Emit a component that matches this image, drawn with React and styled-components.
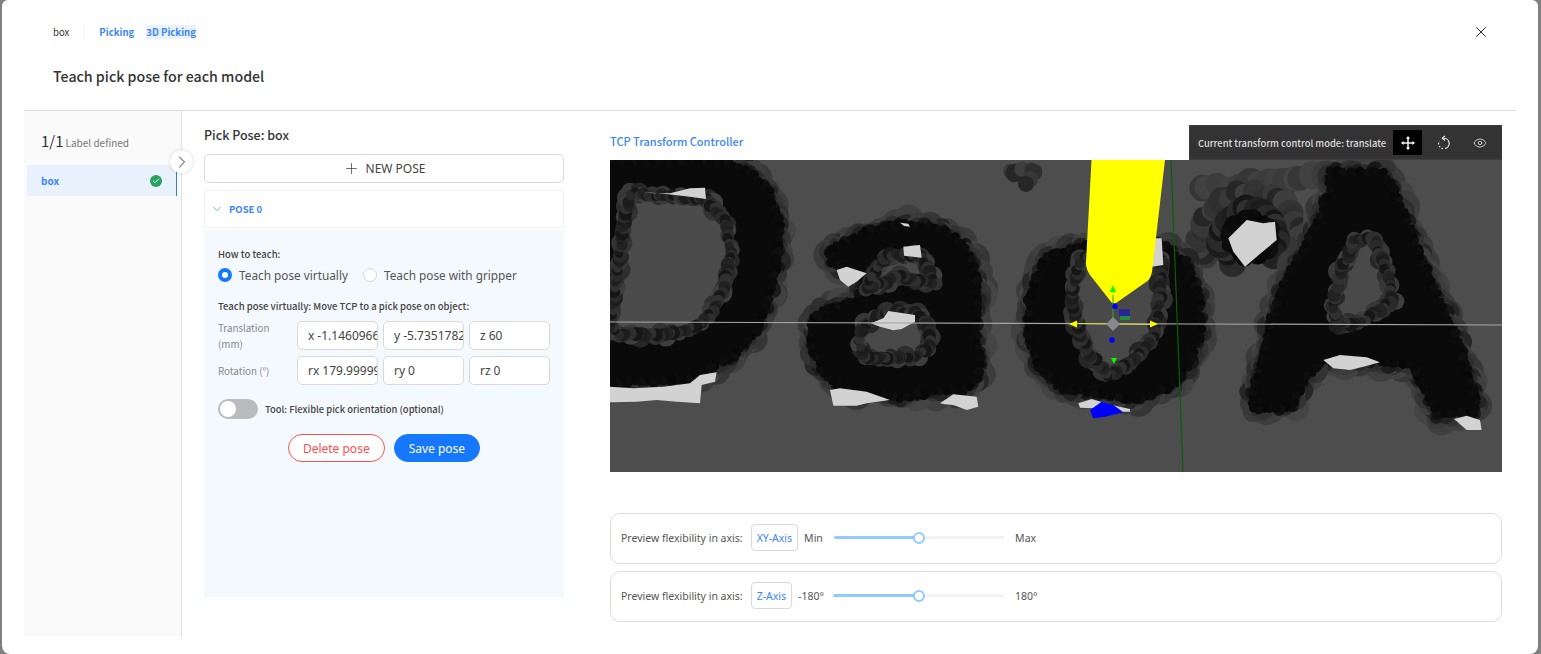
import styled, { createGlobalStyle } from "styled-components";
import { Plus, X, ChevronDown, ChevronRight, Check, Eye } from "lucide-react";

const Global = createGlobalStyle`
  html, body { margin: 0; padding: 0; background: #808080; overflow: hidden; }
  * { box-sizing: border-box; }
  body { font-family: "Noto Sans CJK SC", "Noto Sans", sans-serif; }
`;
const BLUE = "#3b86f7";
const BODY_FONT = `"Noto Sans", "Open Sans", sans-serif`;

const Modal = styled.div`
  width: 1536px;
  height: 654px;
  margin-left: 2px;
  background: #fff;
  border-radius: 6px 6px 8px 8px;
  display: flex;
  flex-direction: column;
  position: relative;
`;
const Header = styled.div`
  height: 111px;
  margin: 0 22px;
  padding: 24px 0 0 29px;
  border-bottom: 1px solid #dcdcdc;
`;
const Crumbs = styled.div`
  display: flex;
  align-items: center;
  height: 16px;
  font-size: 9.6px;
  color: #333;
`;
const CrumbName = styled.span`
  padding-right: 14px;
  border-right: 1px solid #eee;
  margin-right: 15px;
  line-height: 12px;
`;
const Tag = styled.span`
  color: ${BLUE};
  font-weight: 700;
  margin-right: 12px;
  line-height: 14px;
  background: ${(props) => (props.$active ? "#e8f1fd" : "transparent")};
`;
const Title = styled.div`
  margin-top: 25px;
  font-size: 14.2px;
  line-height: 22px;
  font-weight: 500;
  color: #333;
`;
const CloseBtn = styled.div`
  position: absolute;
  top: 23px;
  left: 1470px;
  color: #111;
  display: flex;
`;
const Body = styled.div`
  display: flex;
  margin: 0 22px;
  height: 525px;
`;
const Sidebar = styled.div`
  width: 158px;
  height: 525px;
  background: #fafafa;
  border-right: 1px solid #e0e0e0;
  padding: 19px 4px 0 3px;
  position: relative;
`;
const Count = styled.div`
  display: flex;
  align-items: baseline;
  height: 22px;
  padding-left: 14px;
  font-size: 15px;
  color: #333;
  gap: 2px;
  margin-bottom: 13px;
`;
const CountLabel = styled.span`
  font-size: 10px;
  color: #777;
`;
const LabelItem = styled.div`
  height: 31px;
  width: 150px;
  display: flex;
  align-items: center;
  justify-content: space-between;
  padding: 0 14px;
  background: #e8f1fc;
  border-right: 1px solid #2d7ff0;
  font-size: 10px;
  font-weight: 700;
  color: ${BLUE};
`;
const DoneBadge = styled.span`
  width: 12px;
  height: 12px;
  border-radius: 50%;
  background: #27a35f;
  color: #fff;
  display: flex;
  align-items: center;
  justify-content: center;
`;
const Expander = styled.div`
  position: absolute;
  top: 39px;
  left: 146px;
  width: 23px;
  height: 23px;
  border-radius: 50%;
  background: #fff;
  box-shadow: 0 0 3px rgba(0, 0, 0, 0.2);
  display: flex;
  align-items: center;
  justify-content: center;
  color: #222;
  z-index: 2;
`;
const PosePane = styled.div`
  width: 360px;
  margin-left: 22px;
  padding-top: 14px;
  display: flex;
  flex-direction: column;
`;
const PaneTitle = styled.div`
  height: 20px;
  line-height: 20px;
  font-size: 12.5px;
  font-weight: 500;
  color: #333;
  margin-bottom: 9px;
`;
const NewPose = styled.div`
  height: 29px;
  border: 1px solid #d9d9d9;
  border-radius: 5px;
  display: flex;
  align-items: center;
  justify-content: center;
  gap: 6px;
  font-family: ${BODY_FONT};
  font-size: 12px;
  color: #444;
  margin-bottom: 7px;
`;
const PoseHead = styled.div`
  height: 38px;
  border: 1px solid #f0f0f0;
  display: flex;
  align-items: center;
  gap: 5px;
  padding-left: 5px;
  font-size: 9.5px;
  font-weight: 700;
  color: ${BLUE};
  margin-bottom: 2px;
`;
const PosePanel = styled.div`
  height: 367px;
  background: #f4f9fd;
  padding: 17px 14px 0;
`;
const SmallHead = styled.div`
  font-size: 9.5px;
  font-weight: 500;
  line-height: 14px;
  color: #444;
`;
const RadioRow = styled.div`
  display: flex;
  margin-top: 5px;
  margin-bottom: 15px;
  height: 18px;
  align-items: center;
`;
const RadioItem = styled.div`
  display: flex;
  align-items: center;
  gap: 7px;
  font-family: ${BODY_FONT};
  font-size: 11.8px;
  color: #555;
  margin-right: 15px;
`;
const RadioDot = styled.span`
  width: 14px;
  height: 14px;
  border-radius: 50%;
  background: #fff;
  border: ${(props) => (props.$on ? "4px solid #1677ff" : "1px solid #d5d5d5")};
`;
const FieldGrid = styled.div`
  display: grid;
  grid-template-columns: 74px 81px 81px 81px;
  column-gap: 5px;
  row-gap: 6px;
  margin-top: 8px;
  grid-auto-rows: 29px;
`;
const FieldLabel = styled.div`
  font-size: 9.8px;
  line-height: 16px;
  color: #888;
  width: 60px;
  align-self: center;
`;
const Field = styled.div`
  background: #fff;
  border: 1px solid #d9d9d9;
  border-radius: 5px;
  padding-left: 10px;
  font-family: ${BODY_FONT};
  font-size: 12px;
  line-height: 27px;
  color: #444;
  overflow: hidden;
  white-space: nowrap;
`;
const FieldPrefix = styled.span`
  margin-right: 3px;
`;
const ToggleRow = styled.div`
  display: flex;
  align-items: center;
  gap: 7px;
  margin-top: 14px;
  font-size: 9.4px;
  font-weight: 500;
  color: #444;
`;
const Toggle = styled.span`
  width: 40px;
  height: 20px;
  border-radius: 10px;
  background: #b9bbbd;
  padding: 2px;
  display: flex;
`;
const Knob = styled.span`
  width: 16px;
  height: 16px;
  border-radius: 50%;
  background: #fff;
`;
const Actions = styled.div`
  display: flex;
  justify-content: center;
  gap: 9px;
  margin-top: 15px;
`;
const PillButton = styled.div`
  height: 28px;
  padding: 0 14px;
  border-radius: 14px;
  font-family: ${BODY_FONT};
  font-size: 12px;
  display: flex;
  align-items: center;
  color: ${(props) => (props.$primary ? "#fff" : "#ff4d4f")};
  background: ${(props) => (props.$primary ? "#1677ff" : "#fff")};
  border: 1px solid ${(props) => (props.$primary ? "#1677ff" : "#ff4d4f")};
`;
const ViewPane = styled.div`
  width: 892px;
  margin-left: 46px;
  padding-top: 14px;
`;
const ViewHead = styled.div`
  height: 35px;
  display: flex;
  justify-content: space-between;
`;
const ViewTitle = styled.div`
  font-size: 11px;
  font-weight: 500;
  color: ${BLUE};
  line-height: 33px;
`;
const ModeBar = styled.div`
  width: 313px;
  background: #333;
  border: 1px solid #3d3d3d;
  display: flex;
  align-items: center;
  padding-left: 8px;
  font-size: 9.4px;
  font-weight: 500;
  color: #ddd;
`;
const ModeLabel = styled.span`
  width: 195px;
  white-space: nowrap;
`;
const ModeBtn = styled.span`
  width: 29px;
  height: 25px;
  margin-right: ${(props) => props.$gap || 0}px;
  display: flex;
  align-items: center;
  justify-content: center;
  background: ${(props) => (props.$on ? "#000" : "transparent")};
  border-radius: 1px;
  color: #fff;
`;
const Scene = styled.svg`
  display: block;
  width: 892px;
  height: 312px;
  background: #4d4d4d;
`;
const Cards = styled.div`
  margin-top: 41px;
  display: flex;
  flex-direction: column;
  gap: 7px;
`;
const AxisCard = styled.div`
  height: 51px;
  border: 1px solid #dcdcdc;
  border-radius: 10px;
  display: flex;
  align-items: center;
  padding: 0 0 2px 10px;
  font-family: ${BODY_FONT};
  font-size: 10.5px;
  color: #555;
`;
const AxisTag = styled.span`
  height: 27px;
  padding: 0 5px;
  margin: 0 6px 0 8px;
  border: 1px solid #d9d9d9;
  border-radius: 4px;
  color: ${BLUE};
  display: flex;
  align-items: center;
`;
const SliderTrack = styled.div`
  width: ${(props) => props.$width}px;
  height: 3px;
  background: #f2f2f2;
  border-radius: 2px;
  margin: 0 11px 0 10px;
  position: relative;
`;
const SliderFill = styled.div`
  height: 3px;
  border-radius: 2px;
  background: #91caff;
`;
const SliderHandle = styled.span`
  position: absolute;
  top: -4.5px;
  width: 12px;
  height: 12px;
  margin-left: -6px;
  border-radius: 50%;
  background: #fff;
  border: 2px solid #91caff;
`;
const EndLabel = styled.span`
  width: ${(props) => props.$width}px;
`;

// seeded noise so the point cloud looks the same each run
const rand = (i) => {
  const v = Math.sin(i * 12.9898 + 4.1) * 43758.5453;
  return v - Math.floor(v);
};

// dab overlapping circles along a line, that is how the depth map looks
const dabs = (pts, r, tones, seed, step = 9) => {
  const out = [];
  let n = seed;
  for (let p = 0; p < pts.length - 1; p++) {
    const [x1, y1] = pts[p];
    const [x2, y2] = pts[p + 1];
    const len = Math.hypot(x2 - x1, y2 - y1);
    const count = Math.max(1, Math.round(len / step));
    for (let i = 0; i < count; i++) {
      const t = i / count;
      n += 1;
      out.push(
        <circle
          key={`${seed}-${n}`}
          cx={x1 + (x2 - x1) * t + (rand(n) - 0.5) * r * 0.6}
          cy={y1 + (y2 - y1) * t + (rand(n + 50) - 0.5) * r * 0.6}
          r={r * (0.7 + rand(n + 90) * 0.5)}
          fill={tones[n % tones.length]}
        />
      );
    }
  }
  return out;
};

const HALO = ["#3f3f3f", "#3a3a3a", "#444444", "#363636", "#414141", "#3c3c3c"];
const RIM = ["#1c1c1c", "#2a2a2a", "#161616", "#303030", "#222222"];
const INNER = ["#2e2e2e", "#383838", "#262626", "#3e3e3e", "#333333"];
const CORE = ["#0a0a0a", "#0c0c0c", "#080808", "#0e0e0e"];

// x, y in the crops: left one is 600,125 and right one is 1050,125 at 3x
const L = (pts) => pts.map(([x, y]) => [600 + x / 3, 125 + y / 3]);
const R = (pts) => pts.map(([x, y]) => [1050 + x / 3, 125 + y / 3]);
const str = (pts) => pts.map(([x, y]) => `${x},${y}`).join(" ");
const closed = (pts) => [...pts, pts[0]];

const letters = [
  // D
  L([[0, 105], [370, 105], [450, 140], [505, 200], [540, 300], [535, 400], [510, 520], [470, 620], [400, 695], [335, 730], [280, 760], [0, 780]]),
  // a
  L([[710, 360], [800, 320], [900, 295], [1020, 310], [1090, 355], [1125, 420], [1135, 520], [1125, 620], [1145, 700], [1135, 760], [1090, 795], [1020, 800], [900, 820], [800, 800], [710, 780], [660, 730], [635, 660], [635, 595], [665, 555], [770, 525], [800, 450], [730, 430], [695, 410], [690, 385]]),
  // o
  [[1030, 290], [1046, 256], [1080, 246], [1165, 246], [1186, 262], [1200, 297], [1202, 335], [1188, 368], [1172, 386], [1135, 400], [1100, 394], [1062, 390], [1038, 368], [1028, 335]],
  // A
  R([[840, 140], [900, 140], [1000, 140], [1030, 195], [1075, 290], [1115, 400], [1155, 490], [1195, 580], [1235, 680], [1270, 790], [1285, 835], [1270, 862], [1210, 868], [1160, 872], [1125, 800], [1090, 720], [990, 715], [820, 700], [760, 770], [725, 845], [660, 852], [610, 852], [605, 800], [640, 700], [660, 600], [700, 480], [760, 370], [810, 270], [835, 195]]),
];

const holes = [
  L([[90, 205], [320, 220], [380, 295], [392, 400], [372, 495], [325, 578], [282, 606], [200, 630], [55, 630], [30, 600], [55, 440], [70, 300]]),
  L([[815, 445], [865, 388], [965, 392], [1005, 475], [900, 455], [805, 490]]),
  L([[790, 600], [855, 562], [950, 562], [985, 620], [990, 675], [935, 698], [795, 698], [775, 650]]),
  [[1080, 258], [1163, 258], [1160, 300], [1153, 337], [1132, 363], [1108, 376], [1087, 352], [1075, 320], [1072, 290]],
  R([[850, 545], [872, 435], [915, 340], [975, 345], [1008, 435], [1030, 525], [965, 568], [922, 598], [862, 598]]),
];

const ringAround = (cx, cy, rx, ry, from = 0, to = Math.PI * 2) => {
  const pts = [];
  for (let i = 0; i <= 24; i++) {
    const a = from + ((to - from) * i) / 24;
    pts.push([cx + Math.cos(a) * rx, cy + Math.sin(a) * ry]);
  }
  return pts;
};

const whites = [
  ...[
    [[30, 785], [100, 790], [190, 785], [270, 775], [300, 750], [350, 742], [345, 770], [305, 780], [300, 835], [230, 830], [170, 825], [110, 830], [30, 832]],
    [[125, 200], [160, 205], [210, 205], [270, 190], [315, 188], [318, 222], [270, 215], [205, 208]],
    [[710, 435], [740, 425], [800, 445], [770, 470], [745, 485], [720, 465]],
    [[910, 365], [960, 360], [965, 398], [912, 392]],
    [[900, 293], [925, 296], [930, 305], [912, 303]],
    [[812, 595], [850, 580], [865, 558], [945, 570], [945, 590], [905, 612], [880, 616], [840, 605]],
    [[690, 795], [720, 790], [800, 800], [870, 825], [800, 835], [770, 842], [700, 842]],
    [[1020, 835], [1060, 808], [1130, 815], [1135, 845], [1100, 855], [1060, 840], [1035, 838]],
  ].map(L),
  ...[
    [[535, 340], [590, 285], [640, 295], [675, 290], [680, 345], [620, 395], [585, 425], [550, 380]],
    [[315, 340], [335, 340], [340, 420], [305, 425]],
    [[820, 705], [870, 690], [950, 697], [990, 712], [940, 725], [900, 735], [850, 730]],
    [[1212, 882], [1250, 872], [1290, 885], [1295, 915], [1250, 915]],
    [[85, 835], [125, 822], [185, 840], [240, 852], [240, 860], [200, 860], [130, 850], [90, 848]],
  ].map(R),
];

const DepthScene = () => (
  <Scene viewBox="610 160 892 312" xmlns="http://www.w3.org/2000/svg">
    <rect x="610" y="160" width="892" height="312" fill="#4d4d4d" />
    {/* blobs that are not part of a letter outline */}
    {dabs([[1200, 190], [1260, 180], [1320, 175]], 13, HALO, 7700, 9)}
    {dabs(ringAround(1250, 238, 50, 44, Math.PI * 0.85, Math.PI * 2.1), 12, INNER, 8000, 9)}
    {dabs(ringAround(1250, 238, 32, 28, Math.PI * 0.7, Math.PI * 2.3), 12, RIM, 8300, 7)}
    {dabs(ringAround(1250, 238, 20, 18, 0, Math.PI * 2), 9, CORE, 8600, 6)}
    {dabs([[1008, 172], [1022, 170], [1036, 174], [1024, 190]], 8, INNER, 8900, 6)}
    {letters.map((pts, i) => dabs(closed(pts), 14, HALO, i * 400 + 10, 8))}
    {letters.map((pts, i) => dabs(closed(pts), 10, INNER, i * 400 + 1200, 7))}
    {letters.map((pts, i) => dabs(closed(pts), 7, RIM, i * 400 + 1700, 8))}
    {letters.map((pts, i) => (
      <polygon key={i} points={str(pts)} fill="#0a0a0a" />
    ))}
    {letters.map((pts, i) => dabs(closed(pts), 4.5, CORE, i * 400 + 2400, 6))}
    {holes.map((pts, i) => (
      <polygon key={i} points={str(pts)} fill={i === 0 ? "#4b4b4b" : "#494949"} />
    ))}
    {holes.map((pts, i) => dabs(closed(pts), 9, INNER, i * 400 + 3600, 7))}
    {holes.map((pts, i) => dabs(closed(pts), 6, RIM, i * 400 + 4000, 4))}
    {whites.map((pts, i) => (
      <polygon key={i} points={str(pts)} fill="#d2d2d2" />
    ))}
    <polygon points={str(R([[120, 855], [155, 830], [190, 840], [220, 862], [165, 875], [130, 880]]))} fill="#0000ff" />
    <line x1="610" y1="322" x2="1502" y2="325" stroke="#a8a8a8" strokeWidth="1.2" />
    <line x1="1171" y1="160" x2="1183" y2="472" stroke="#0b5c0b" strokeWidth="1.2" />
    <path
      d="M1091.5 160 H1165 L1152 272 Q1150 280 1146 282 L1116 303 H1112 L1090 275 Q1085.5 268 1086 262 Z"
      fill="#ffff00"
    />
    <line x1="1113" y1="295" x2="1113" y2="323" stroke="#22aa22" strokeWidth="1" />
    <polygon points="1113,285 1110,292 1116,292" fill="#00ff00" />
    <polygon points="1114,364 1111,358 1117,358" fill="#00ff00" />
    <line x1="1075" y1="323.5" x2="1153" y2="324.5" stroke="#dcdc44" strokeWidth="1" />
    <polygon points="1069,324 1077,320.5 1077,327.5" fill="#ffff00" />
    <polygon points="1158,324 1150,320.5 1150,327.5" fill="#ffff00" />
    <polygon points="1113,317 1120,324 1113,331 1106,324" fill="#8a8a8a" />
    <circle cx="1115" cy="306.5" r="2.8" fill="#0000ff" />
    <circle cx="1112" cy="340" r="2.8" fill="#0000ff" />
    <rect x="1119" y="309" width="11" height="7" fill="#262696" />
    <rect x="1120" y="316" width="10" height="4" fill="#1f9141" />
  </Scene>
);

const DragIcon = () => (
  <svg width="14" height="14" viewBox="0 0 16 16" fill="currentColor">
    <rect x="7.2" y="2" width="1.6" height="12" />
    <rect x="2" y="7.2" width="12" height="1.6" />
    <polygon points="8,0 5.6,3 10.4,3" />
    <polygon points="8,16 5.6,13 10.4,13" />
    <polygon points="0,8 3,5.6 3,10.4" />
    <polygon points="16,8 13,5.6 13,10.4" />
  </svg>
);

const RotateIcon = () => (
  <svg width="16" height="16" viewBox="0 0 16 16" fill="none" stroke="currentColor" strokeWidth="1.1">
    <path d="M8 3.2 A5.2 5.2 0 0 1 9 13.5" />
    <path d="M7 13.6 A5.2 5.2 0 0 1 3.2 6" strokeDasharray="1.6 1.6" />
    <path d="M9 0.8 L6.2 3.2 L9 5.4" strokeLinejoin="round" />
  </svg>
);

const AxisRow = ({ axis, min, max, fill, minWidth, trackWidth }) => (
  <AxisCard>
    Preview flexibility in axis:
    <AxisTag>{axis}</AxisTag>
    <EndLabel $width={minWidth}>{min}</EndLabel>
    <SliderTrack $width={trackWidth}>
      <SliderFill style={{ width: `${fill}%` }} />
      <SliderHandle style={{ left: `${fill}%` }} />
    </SliderTrack>
    <EndLabel $width={24}>{max}</EndLabel>
  </AxisCard>
);

const App = () => (
  <>
    <Global />
    <Modal>
      <Header>
        <Crumbs>
          <CrumbName>box</CrumbName>
          <Tag>Picking</Tag>
          <Tag $active>3D Picking</Tag>
        </Crumbs>
        <Title>Teach pick pose for each model</Title>
      </Header>
      <CloseBtn>
        <X size={18} strokeWidth={1.2} />
      </CloseBtn>
      <Body>
        <Sidebar>
          <Count>
            1/1 <CountLabel>Label defined</CountLabel>
          </Count>
          <LabelItem>
            box
            <DoneBadge>
              <Check size={8} strokeWidth={3} />
            </DoneBadge>
          </LabelItem>
          <Expander>
            <ChevronRight size={20} strokeWidth={1.1} />
          </Expander>
        </Sidebar>
        <PosePane>
          <PaneTitle>Pick Pose: box</PaneTitle>
          <NewPose>
            <Plus size={17} strokeWidth={1.1} />
            NEW POSE
          </NewPose>
          <PoseHead>
            <ChevronDown size={14} strokeWidth={1.2} />
            POSE 0
          </PoseHead>
          <PosePanel>
            <SmallHead>How to teach:</SmallHead>
            <RadioRow>
              <RadioItem>
                <RadioDot $on />
                Teach pose virtually
              </RadioItem>
              <RadioItem>
                <RadioDot />
                Teach pose with gripper
              </RadioItem>
            </RadioRow>
            <SmallHead>Teach pose virtually: Move TCP to a pick pose on object:</SmallHead>
            <FieldGrid>
              <FieldLabel>Translation (mm)</FieldLabel>
              <Field><FieldPrefix>x</FieldPrefix>-1.14609665</Field>
              <Field><FieldPrefix>y</FieldPrefix>-5.73517824</Field>
              <Field><FieldPrefix>z</FieldPrefix>60</Field>
              <FieldLabel>Rotation (°)</FieldLabel>
              <Field><FieldPrefix>rx</FieldPrefix>179.999999</Field>
              <Field><FieldPrefix>ry</FieldPrefix>0</Field>
              <Field><FieldPrefix>rz</FieldPrefix>0</Field>
            </FieldGrid>
            <ToggleRow>
              <Toggle><Knob /></Toggle>
              Tool: Flexible pick orientation (optional)
            </ToggleRow>
            <Actions>
              <PillButton>Delete pose</PillButton>
              <PillButton $primary>Save pose</PillButton>
            </Actions>
          </PosePanel>
        </PosePane>
        <ViewPane>
          <ViewHead>
            <ViewTitle>TCP Transform Controller</ViewTitle>
            <ModeBar>
              <ModeLabel>Current transform control mode: translate</ModeLabel>
              <ModeBtn $on $gap={7}><DragIcon /></ModeBtn>
              <ModeBtn $gap={7}><RotateIcon /></ModeBtn>
              <ModeBtn><Eye size={14} strokeWidth={1.2} /></ModeBtn>
            </ModeBar>
          </ViewHead>
          <DepthScene />
          <Cards>
            <AxisRow axis="XY-Axis" min="Min" max="Max" fill={50} minWidth={20} trackWidth={170} />
            <AxisRow axis="Z-Axis" min="-180°" max="180°" fill={50} minWidth={25} trackWidth={171} />
          </Cards>
        </ViewPane>
      </Body>
    </Modal>
  </>
);

export default App;
